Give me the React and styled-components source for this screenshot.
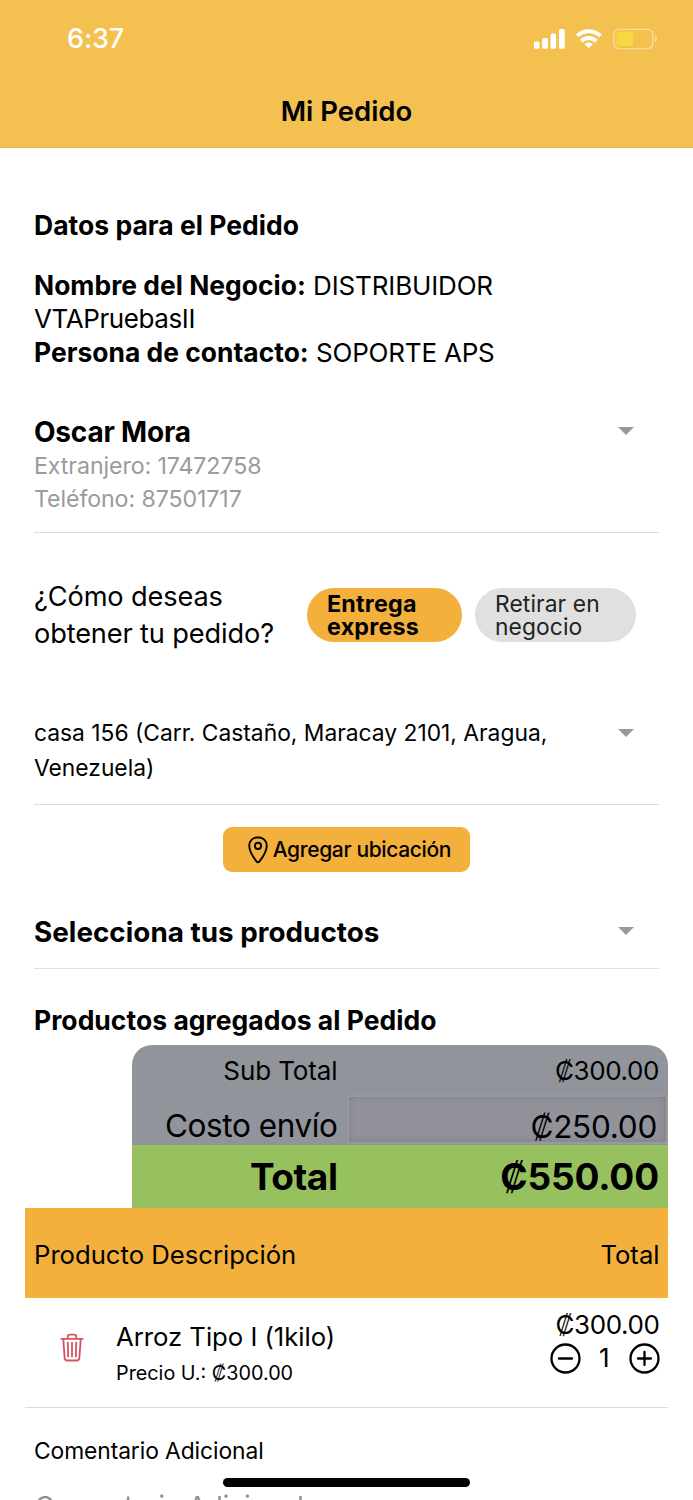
import React from "react";
import styled, { createGlobalStyle } from "styled-components";

const GlobalStyle = createGlobalStyle`
  * { box-sizing: border-box; }
  html, body { margin: 0; padding: 0; background: #fff; overflow: hidden; }
  body { font-family: Inter, "Liberation Sans", sans-serif; color: #000; }
  button { font-family: inherit; color: inherit; border: 0; padding: 0; background: none; }
`;

const Screen = styled.div`
  position: relative;
  width: 693px;
  height: 1500px;
  overflow: hidden;
  background: #fff;
`;

const Header = styled.header`
  height: 148px;
  background: #f4c050;
  border-bottom: 1px solid #e3b34c;
`;

const StatusBar = styled.div`
  display: flex;
  align-items: center;
  justify-content: space-between;
  height: 77px;
  padding: 0 35px 0 67px;
  color: #fff;
`;

const Clock = styled.span`
  font-size: 27px;
  font-weight: 550;
  letter-spacing: -0.1px;
`;

const Title = styled.h1`
  margin: 0;
  font-size: 27.5px;
  font-weight: 580;
  line-height: 69px;
  text-align: center;
`;

const Content = styled.main`
  display: flex;
  flex-direction: column;
  padding: 60px 34px 0;
`;

const SectionTitle = styled.h2`
  margin: ${(p) => p.$top || 0}px 0 0;
  font-size: 26.5px;
  font-weight: 700;
  line-height: 34px;
  letter-spacing: 0.02px;
  white-space: nowrap;
`;

const Info = styled.p`
  margin: 26.5px 0 0;
  font-size: 26px;
  line-height: 33.6px;
`;

const Label = styled.b`
  font-size: 26.4px;
  line-height: 1;
  letter-spacing: 0.03px;
`;

const Value = styled.span`
  letter-spacing: ${(p) => p.$spacing}px;
`;

const Picker = styled.div`
  display: flex;
  justify-content: space-between;
  align-items: flex-start;
  width: 625px;
  height: ${(p) => p.$height}px;
  margin-top: ${(p) => p.$top}px;
  padding-right: 25px;
  border-bottom: 1px solid ${(p) => p.$line || "#dcdcdc"};
`;

const Caret = styled.span`
  width: 0;
  height: 0;
  margin-top: ${(p) => p.$top}px;
  border: 8.25px solid transparent;
  border-top: 8px solid #999;
  border-bottom: 0;
`;

const CustomerName = styled.div`
  font-size: 28px;
  font-weight: 700;
  line-height: 35px;
  letter-spacing: -0.2px;
`;

const CustomerDetail = styled.div`
  font-size: 23.2px;
  line-height: 33.5px;
  color: #9b9b9b;
  letter-spacing: -0.1px;
`;

const Delivery = styled.div`
  display: flex;
  align-items: flex-start;
  margin-top: 45.5px;
`;

const Question = styled.div`
  width: 273px;
  margin-top: 1px;
  font-size: 27.2px;
  line-height: 36.5px;
  letter-spacing: -0.14px;
`;

const Pill = styled.button`
  width: ${(p) => p.$width}px;
  height: 54px;
  margin: 9.5px 13.5px 0 0;
  padding: 1px 20px 0;
  border-radius: 27px;
  background: ${(p) => (p.$active ? "#f3b03d" : "#e0e0e0")};
  color: ${(p) => (p.$active ? "#000" : "#222")};
  font-size: ${(p) => (p.$active ? 23.3 : 22.8)}px;
  font-weight: ${(p) => (p.$active ? 700 : 400)};
  line-height: 23.5px;
  letter-spacing: ${(p) => (p.$active ? 0.22 : 0.1)}px;
  text-align: left;
  white-space: nowrap;
`;

const Address = styled.div`
  padding-top: 1px;
  font-size: 22.8px;
  line-height: 35px;
`;

const AddButton = styled.button`
  display: flex;
  align-items: center;
  align-self: center;
  width: 247.5px;
  height: 45.5px;
  margin-top: 22px;
  padding: 0 0 1px 25px;
  border-radius: 9px;
  background: #f3b03d;
  font-size: 21px;
  font-weight: 500;
  letter-spacing: -0.35px;
  white-space: nowrap;
  svg { margin: 1px 5px 0 0; }
`;

const PickerTitle = styled.div`
  font-size: 27.8px;
  font-weight: 700;
  line-height: 37px;
  letter-spacing: 0.03px;
`;

const OrderTable = styled.section`
  width: 642.5px;
  margin: 8px 0 0 -9px;
`;

const Summary = styled.div`
  width: 535.5px;
  margin-left: auto;
  border-radius: 20px 20px 0 0;
  background: #92949c;
  overflow: hidden;
`;

const SummaryRow = styled.div`
  display: grid;
  grid-template-columns: 214.5px 1fr;
  height: ${(p) => p.$height}px;
  background: ${(p) => p.$color || "transparent"};
  font-size: ${(p) => p.$size}px;
  font-weight: ${(p) => p.$weight || 400};
  line-height: ${(p) => p.$line}px;
  letter-spacing: ${(p) => p.$spacing}px;
  text-align: right;
`;

const SummaryLabel = styled.span`
  padding-right: 9px;
`;

const SummaryValue = styled.span`
  padding-right: 8.5px;
  letter-spacing: ${(p) => p.$spacing}px;
`;

const CostField = styled.div`
  height: 49.5px;
  padding: 0 8.5px 0 0;
  border: 2px solid #9a9a9c;
  background: #92929b;
  box-shadow: inset 0 0 8px rgba(80, 80, 90, 0.28);
  line-height: 59px;
  letter-spacing: -0.27px;
`;

const TableHead = styled.div`
  display: flex;
  justify-content: space-between;
  height: 89.5px;
  padding: 0 8px 0 9px;
  background: #f3b03d;
  font-size: 25.7px;
  line-height: 93px;
  letter-spacing: -0.02px;
`;

const ProductRow = styled.div`
  display: flex;
  height: 110.5px;
  padding: 0 8px 0 35px;
  border-bottom: 1.5px solid #dcdcdc;
`;

const TrashButton = styled.button`
  width: 56px;
  height: 100px;
  text-align: left;
  svg { display: block; }
`;

const ProductInfo = styled.div`
  flex: 1;
  padding-top: 21.5px;
`;

const ProductName = styled.div`
  font-size: 25.7px;
  line-height: 35px;
  letter-spacing: -0.02px;
`;

const UnitPrice = styled.div`
  font-size: 19.8px;
  line-height: 38px;
`;

const ProductAmount = styled.div`
  display: flex;
  flex-direction: column;
  align-items: flex-end;
  padding-top: 9px;
`;

const Price = styled.div`
  font-size: 26px;
  line-height: 35px;
  letter-spacing: -0.4px;
`;

const Stepper = styled.div`
  display: flex;
  align-items: center;
  justify-content: space-between;
  width: 110.5px;
  height: 34px;
  margin-right: -0.5px;
  font-size: 26px;
  svg { display: block; }
`;

const Quantity = styled.span`
  line-height: 32px;
  margin: -1.5px 1px 0 0;
`;

const CommentLabel = styled.label`
  margin-top: 24.5px;
  font-size: 22.8px;
  line-height: 36px;
  letter-spacing: -0.08px;
`;

const CommentInput = styled.div`
  margin: 20.5px 0 0 1px;
  font-size: 26.3px;
  line-height: 34px;
  color: #8e8e8e;
  letter-spacing: 0.1px;
`;

const HomeIndicator = styled.div`
  position: absolute;
  left: 222.5px;
  bottom: 13.5px;
  width: 247.5px;
  height: 8.5px;
  border-radius: 5px;
  background: #000;
`;

const StatusIcons = () => (
  <svg width="126" height="24" viewBox="532 26 126 24">
    <g fill="#fff">
      <rect x="534" y="40.5" width="5.5" height="7.3" rx="1.6" />
      <rect x="542.2" y="37" width="5.7" height="10.8" rx="1.6" />
      <rect x="550.6" y="32.6" width="5.5" height="15.2" rx="1.6" />
      <rect x="559" y="28" width="5.7" height="19.8" rx="1.6" />
      <path d="M588.6 46.8 L585 43.2 Q588.6 40.4 592.2 43.2 Z" stroke="#fff" strokeWidth="1" strokeLinejoin="round" />
    </g>
    <g fill="none" stroke="#fff" strokeWidth="4">
      <path d="M577.1 34.9 Q582.2 30.2 588.8 30.2 Q595.4 30.2 600.5 34.9" />
      <path d="M581.3 40.2 Q584.6 37.1 588.8 37.1 Q593 37.1 596.3 40.2" />
    </g>
    <rect x="613.8" y="28.4" width="39" height="19.2" rx="5.2" fill="none" stroke="#f9dc9d" strokeWidth="1.4" />
    <rect x="616.2" y="30.8" width="17" height="14.2" rx="2.8" fill="#f6d843" />
    <path d="M655 34.7 Q657.2 36 657.2 38 Q657.2 40 655 41.3 Z" fill="#f9dc9d" />
  </svg>
);

const PinIcon = () => (
  <svg width="20" height="28" viewBox="0 0 20 28" fill="none" stroke="#000" strokeWidth="1.9" strokeLinejoin="round">
    <path d="M10 1.2C5.1 1.2 1.2 4.9 1.2 9.6c0 5 4 11.7 7.5 16 .7.9 1.9.9 2.6 0 3.500-4.300 7.500-11 7.500-16 0-4.700-3.900-8.400-8.800-8.400z" />
    <circle cx="10" cy="9.9" r="3.1" />
  </svg>
);

const TrashIcon = () => (
  <svg width="24" height="30" viewBox="0 0 24 30" fill="none" stroke="#d9525f" strokeWidth="1.8" strokeLinecap="round" strokeLinejoin="round">
    <path d="M1.300 5.800h21.400M3.300 5.800l1.300 19.100c.1 1.700 1 2.600 2.500 2.600h9.800c1.500 0 2.400-.9 2.500-2.600l1.300-19.100M7.800 5.800V3.500c0-1.200.7-1.900 1.900-1.900h4.600c1.200 0 1.900.7 1.900 1.900v2.300M12 9.600v13.800M7.800 9.600l.4 13.800M16.200 9.600l-.4 13.800" />
  </svg>
);

const StepIcon = ({ plus }) => (
  <svg width="31" height="31" viewBox="0 0 31 31" fill="none" stroke="#000" strokeWidth="2.3" strokeLinecap="round">
    <circle cx="15.500" cy="15.500" r="14" />
    <path d={plus ? "M9 15.500h13M15.500 9v13" : "M9 15.500h13"} />
  </svg>
);

export default function App() {
  return (
    <Screen>
      <GlobalStyle />
      <Header>
        <StatusBar>
          <Clock>6:37</Clock>
          <StatusIcons />
        </StatusBar>
        <Title>Mi Pedido</Title>
      </Header>
      <Content>
        <SectionTitle>Datos para el Pedido</SectionTitle>
        <Info>
          <Label>Nombre del Negocio:</Label> <Value $spacing={-0.15}>DISTRIBUIDOR</Value>
          <br />
          <Value $spacing={-0.4}>VTAPruebasII</Value>
          <br />
          <Label>Persona de contacto:</Label> <Value $spacing={-0.2}>SOPORTE APS</Value>
        </Info>
        <Picker $top={45.5} $height={118}>
          <div>
            <CustomerName>Oscar Mora</CustomerName>
            <CustomerDetail>Extranjero: 17472758</CustomerDetail>
            <CustomerDetail>Teléfono: 87501717</CustomerDetail>
          </div>
          <Caret $top={12} />
        </Picker>
        <Delivery>
          <Question>¿Cómo deseas<br />obtener tu pedido?</Question>
          <Pill $active $width={154.5}>Entrega<br />express</Pill>
          <Pill $width={161}>Retirar en<br />negocio</Pill>
        </Delivery>
        <Picker $top={62} $height={90.5}>
          <Address>casa 156 (Carr. Castaño, Maracay 2101, Aragua,<br />Venezuela)</Address>
          <Caret $top={14.5} />
        </Picker>
        <AddButton><PinIcon />Agregar ubicación</AddButton>
        <Picker $top={41.5} $height={55.5} $line="#e0e0e0">
          <PickerTitle>Selecciona tus productos</PickerTitle>
          <Caret $top={13} />
        </Picker>
        <SectionTitle $top={33.5}>Productos agregados al Pedido</SectionTitle>
        <OrderTable>
          <Summary>
            <SummaryRow $height={50} $line={52} $size={26} $spacing={-0.11}>
              <SummaryLabel>Sub Total</SummaryLabel>
              <SummaryValue $spacing={-0.4}>₡300.00</SummaryValue>
            </SummaryRow>
            <SummaryRow $height={50} $line={61} $size={31.5} $spacing={-0.41}>
              <SummaryLabel>Costo envío</SummaryLabel>
              <CostField>₡250.00</CostField>
            </SummaryRow>
            <SummaryRow $height={63.5} $line={63.5} $size={37} $weight={700} $spacing={-0.43} $color="#97c15e">
              <SummaryLabel>Total</SummaryLabel>
              <SummaryValue $spacing={-0.13}>₡550.00</SummaryValue>
            </SummaryRow>
          </Summary>
          <TableHead>
            <span>Producto Descripción</span>
            <span>Total</span>
          </TableHead>
          <ProductRow>
            <TrashButton><TrashIcon /></TrashButton>
            <ProductInfo>
              <ProductName>Arroz Tipo I (1kilo)</ProductName>
              <UnitPrice>Precio U.: ₡300.00</UnitPrice>
            </ProductInfo>
            <ProductAmount>
              <Price>₡300.00</Price>
              <Stepper>
                <StepIcon />
                <Quantity>1</Quantity>
                <StepIcon plus />
              </Stepper>
            </ProductAmount>
          </ProductRow>
        </OrderTable>
        <CommentLabel>Comentario Adicional</CommentLabel>
        <CommentInput>Comentario Adicional</CommentInput>
      </Content>
      <HomeIndicator />
    </Screen>
  );
}
